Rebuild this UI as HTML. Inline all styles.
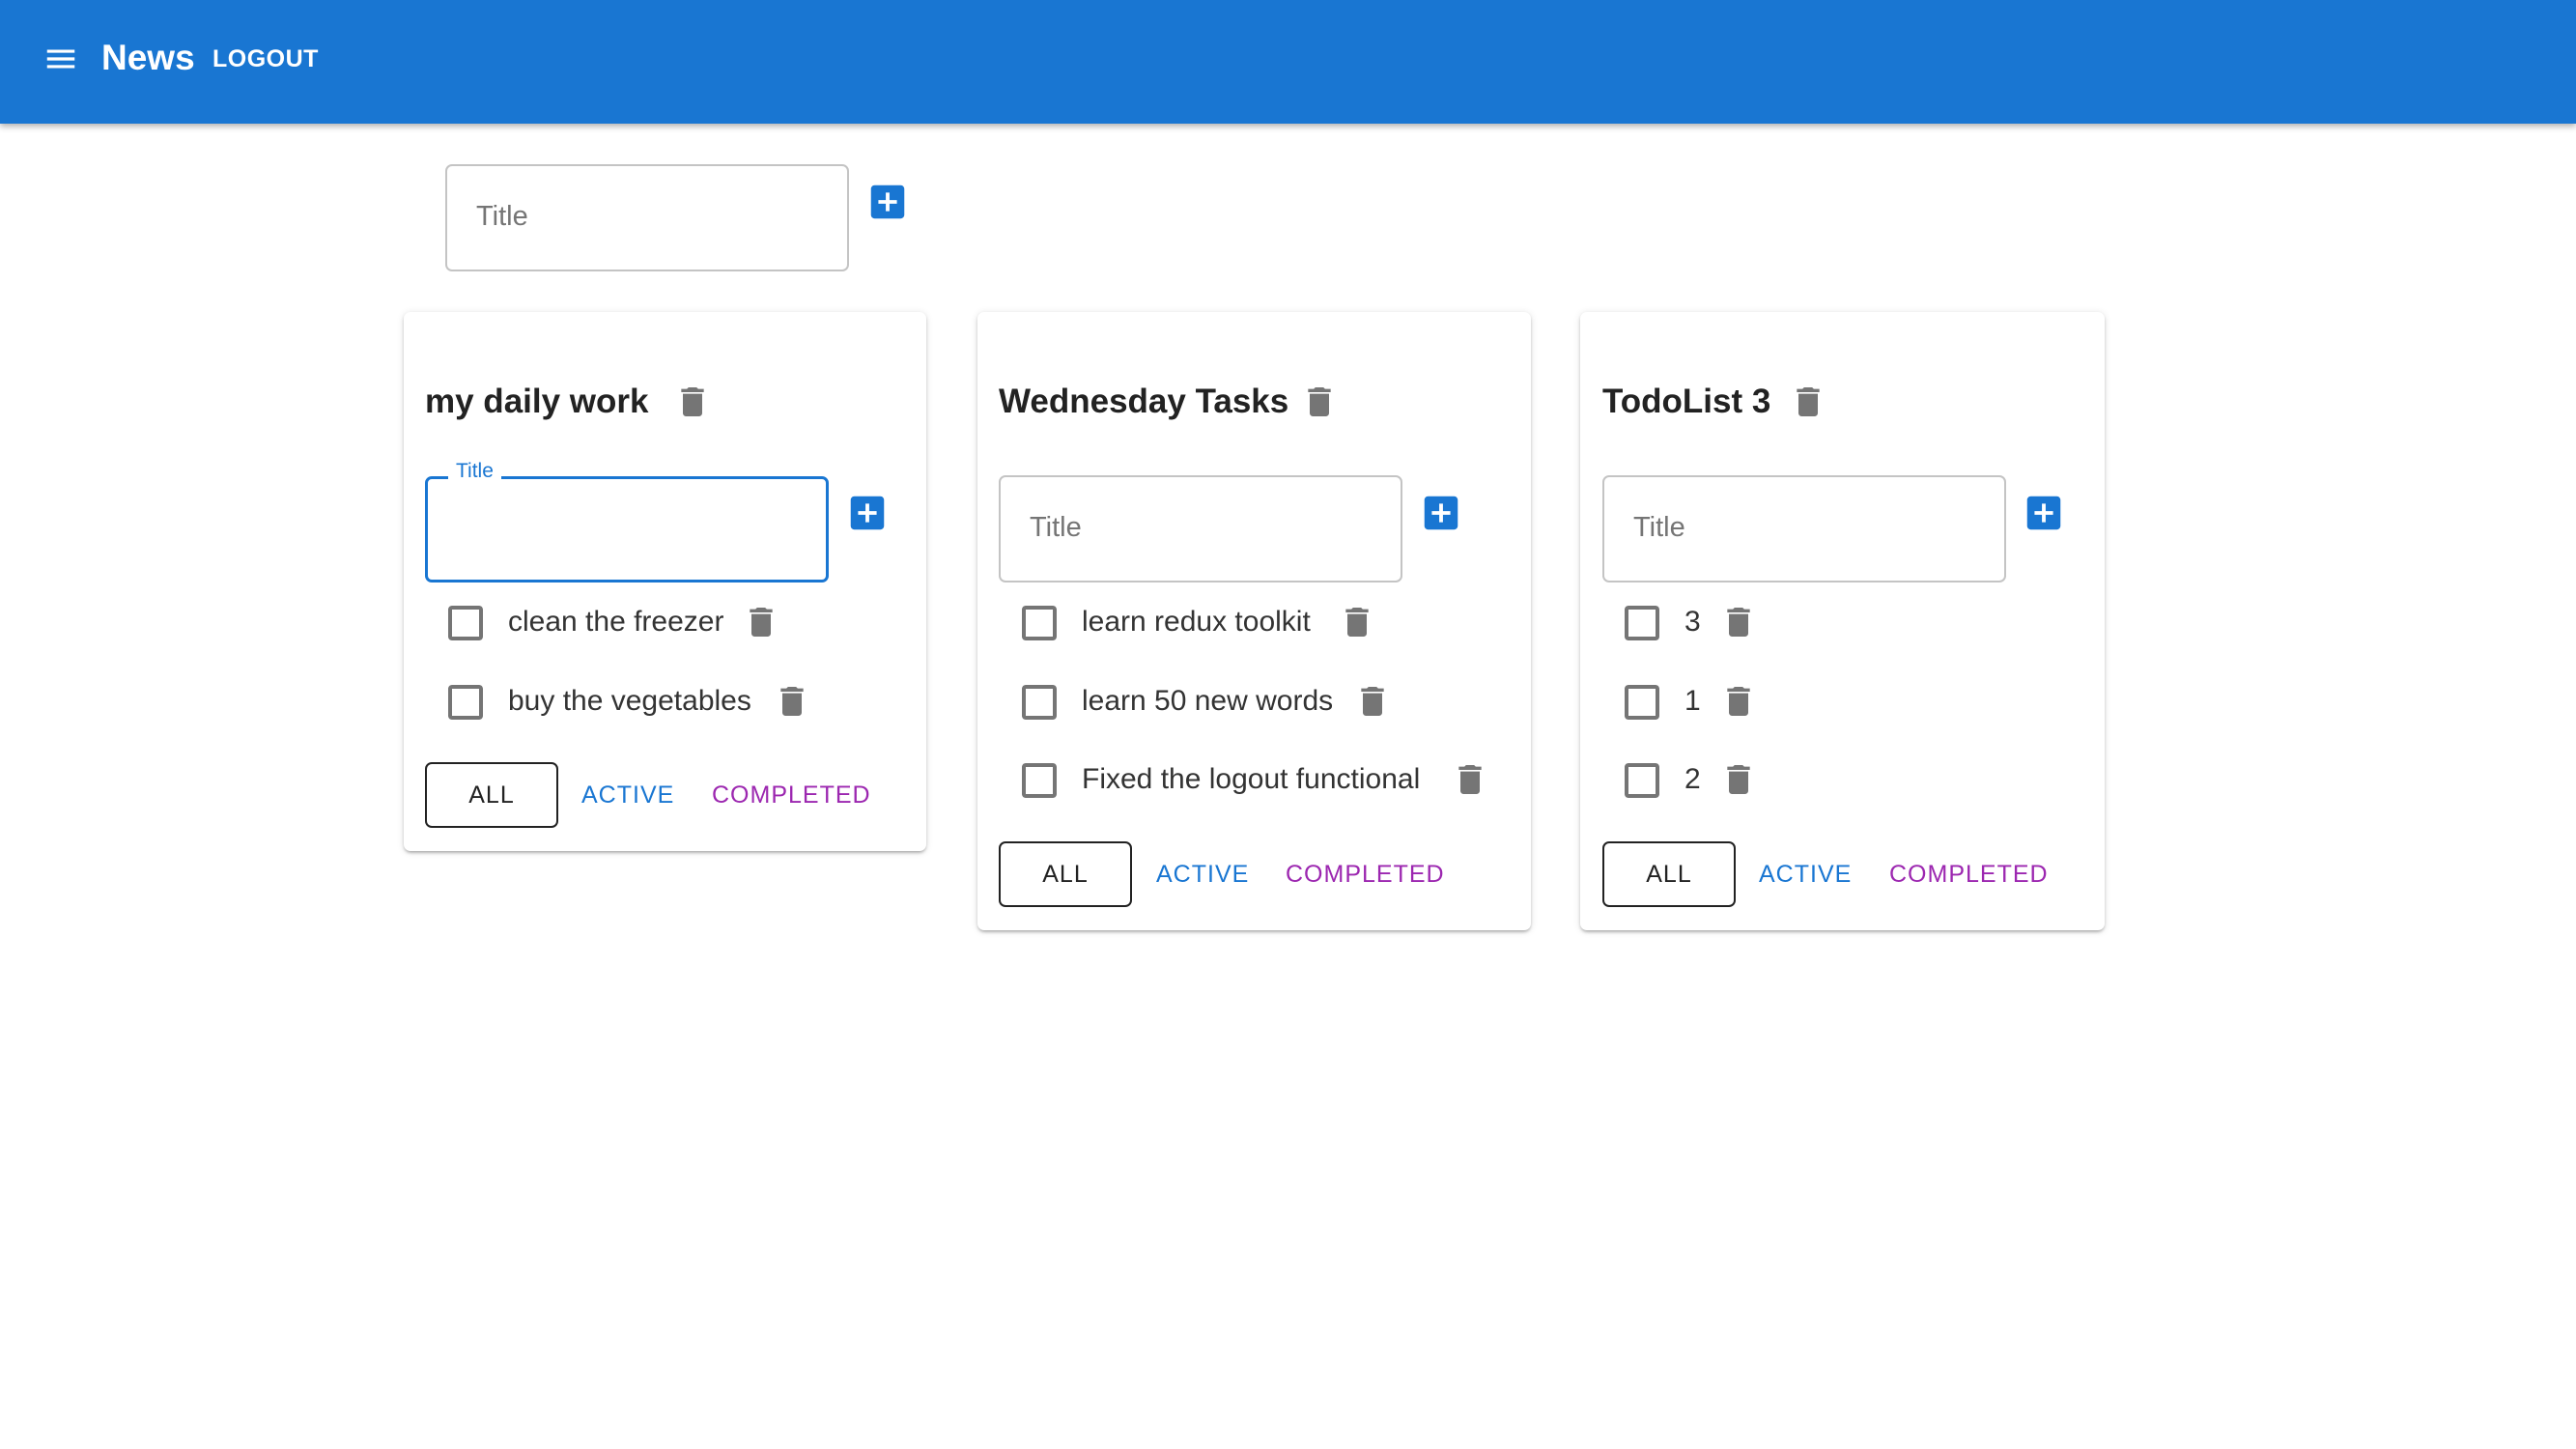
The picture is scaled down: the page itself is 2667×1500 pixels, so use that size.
<!DOCTYPE html>
<html><head><meta charset="utf-8"><style>
*{margin:0;padding:0;box-sizing:border-box}
body{width:2667px;height:1500px;background:#fff;font-family:"Liberation Sans",sans-serif;position:relative;overflow:hidden}
.abs{position:absolute}
.hdr{left:0;top:0;width:2667px;height:128px;background:#1976d2;box-shadow:0 3px 6px rgba(0,0,0,.3)}
.inp{position:absolute;border:2px solid #c4c4c4;border-radius:7px;height:111px;width:418px}
.inp span{position:absolute;left:30px;top:36px;font-size:29px;color:#757575}
.card{position:absolute;background:#fff;border-radius:7px;box-shadow:0 3px 3px -2px rgba(0,0,0,.2),0 2px 3px rgba(0,0,0,.14),0 1px 8px rgba(0,0,0,.12)}
.ttl{position:absolute;font-weight:bold;font-size:35px;color:#222}
.item{position:absolute;font-size:30px;color:#333}
.btn{position:absolute;font-size:25px;letter-spacing:1px}
.all{border:2px solid #222;border-radius:7px;width:138px;height:68px;text-align:center;line-height:64px;color:#222}
svg{position:absolute}
</style></head><body>
<div class="abs hdr">
<svg style="left:44px;top:42px" width="38" height="38" viewBox="0 0 24 24"><path fill="#fff" d="M3 18h18v-2H3v2zm0-5h18v-2H3v2zm0-7v2h18V6H3z"/></svg>
<div class="abs" style="left:105px;top:39px;font-size:37px;color:#fff;font-weight:600">News</div>
<div class="abs" style="left:220px;top:47px;font-size:25px;color:#fff;font-weight:bold;letter-spacing:.5px">LOGOUT</div>
</div>

<div class="inp" style="left:461px;top:170px"><span>Title</span></div>
<svg style="left:896px;top:186px" width="46" height="46" viewBox="0 0 24 24"><path fill="#1976d2" d="M19 3H5c-1.11 0-2 .9-2 2v14c0 1.1.89 2 2 2h14c1.1 0 2-.9 2-2V5c0-1.1-.9-2-2-2zm-2 10h-4v4h-2v-4H7v-2h4V7h2v4h4v2z"/></svg>

<div class="card" style="left:418px;top:323px;width:541px;height:558px"></div>
<div class="ttl" style="left:440px;top:396px">my daily work</div>
<svg style="left:697px;top:396px" width="40" height="40" viewBox="0 0 24 24"><path fill="#757575" d="M6 19c0 1.1.9 2 2 2h8c1.1 0 2-.9 2-2V7H6v12zM19 4h-3.5l-1-1h-5l-1 1H5v2h14V4z"/></svg>
<div class="abs" style="left:440px;top:493px;width:418px;height:110px;border:3px solid #1976d2;border-radius:7px"></div>
<div class="abs" style="left:464px;top:476px;font-size:21px;color:#1976d2;background:#fff;padding:0 8px">Title</div>
<svg style="left:875px;top:508px" width="46" height="46" viewBox="0 0 24 24"><path fill="#1976d2" d="M19 3H5c-1.11 0-2 .9-2 2v14c0 1.1.89 2 2 2h14c1.1 0 2-.9 2-2V5c0-1.1-.9-2-2-2zm-2 10h-4v4h-2v-4H7v-2h4V7h2v4h4v2z"/></svg>

<div class="card" style="left:1012px;top:323px;width:573px;height:640px"></div>
<div class="ttl" style="left:1034px;top:396px">Wednesday Tasks</div>
<svg style="left:1346px;top:396px" width="40" height="40" viewBox="0 0 24 24"><path fill="#757575" d="M6 19c0 1.1.9 2 2 2h8c1.1 0 2-.9 2-2V7H6v12zM19 4h-3.5l-1-1h-5l-1 1H5v2h14V4z"/></svg>
<div class="inp" style="left:1034px;top:492px"><span>Title</span></div>
<svg style="left:1469px;top:508px" width="46" height="46" viewBox="0 0 24 24"><path fill="#1976d2" d="M19 3H5c-1.11 0-2 .9-2 2v14c0 1.1.89 2 2 2h14c1.1 0 2-.9 2-2V5c0-1.1-.9-2-2-2zm-2 10h-4v4h-2v-4H7v-2h4V7h2v4h4v2z"/></svg>

<div class="card" style="left:1636px;top:323px;width:543px;height:640px"></div>
<div class="ttl" style="left:1659px;top:396px">TodoList 3</div>
<svg style="left:1852px;top:396px" width="40" height="40" viewBox="0 0 24 24"><path fill="#757575" d="M6 19c0 1.1.9 2 2 2h8c1.1 0 2-.9 2-2V7H6v12zM19 4h-3.5l-1-1h-5l-1 1H5v2h14V4z"/></svg>
<div class="inp" style="left:1659px;top:492px"><span>Title</span></div>
<svg style="left:2093px;top:508px" width="46" height="46" viewBox="0 0 24 24"><path fill="#1976d2" d="M19 3H5c-1.11 0-2 .9-2 2v14c0 1.1.89 2 2 2h14c1.1 0 2-.9 2-2V5c0-1.1-.9-2-2-2zm-2 10h-4v4h-2v-4H7v-2h4V7h2v4h4v2z"/></svg>

<svg style="left:458px;top:621px" width="48" height="48" viewBox="0 0 24 24"><path fill="#757575" d="M19 5v14H5V5h14m0-2H5c-1.1 0-2 .9-2 2v14c0 1.1.9 2 2 2h14c1.1 0 2-.9 2-2V5c0-1.1-.9-2-2-2z"/></svg>
<div class="item" style="left:526px;top:627px">clean the freezer</div>
<svg style="left:768px;top:624px" width="40" height="40" viewBox="0 0 24 24"><path fill="#757575" d="M6 19c0 1.1.9 2 2 2h8c1.1 0 2-.9 2-2V7H6v12zM19 4h-3.5l-1-1h-5l-1 1H5v2h14V4z"/></svg>
<svg style="left:458px;top:703px" width="48" height="48" viewBox="0 0 24 24"><path fill="#757575" d="M19 5v14H5V5h14m0-2H5c-1.1 0-2 .9-2 2v14c0 1.1.9 2 2 2h14c1.1 0 2-.9 2-2V5c0-1.1-.9-2-2-2z"/></svg>
<div class="item" style="left:526px;top:709px">buy the vegetables</div>
<svg style="left:800px;top:706px" width="40" height="40" viewBox="0 0 24 24"><path fill="#757575" d="M6 19c0 1.1.9 2 2 2h8c1.1 0 2-.9 2-2V7H6v12zM19 4h-3.5l-1-1h-5l-1 1H5v2h14V4z"/></svg>

<svg style="left:1052px;top:621px" width="48" height="48" viewBox="0 0 24 24"><path fill="#757575" d="M19 5v14H5V5h14m0-2H5c-1.1 0-2 .9-2 2v14c0 1.1.9 2 2 2h14c1.1 0 2-.9 2-2V5c0-1.1-.9-2-2-2z"/></svg>
<div class="item" style="left:1120px;top:627px">learn redux toolkit</div>
<svg style="left:1385px;top:624px" width="40" height="40" viewBox="0 0 24 24"><path fill="#757575" d="M6 19c0 1.1.9 2 2 2h8c1.1 0 2-.9 2-2V7H6v12zM19 4h-3.5l-1-1h-5l-1 1H5v2h14V4z"/></svg>
<svg style="left:1052px;top:703px" width="48" height="48" viewBox="0 0 24 24"><path fill="#757575" d="M19 5v14H5V5h14m0-2H5c-1.1 0-2 .9-2 2v14c0 1.1.9 2 2 2h14c1.1 0 2-.9 2-2V5c0-1.1-.9-2-2-2z"/></svg>
<div class="item" style="left:1120px;top:709px">learn 50 new words</div>
<svg style="left:1401px;top:706px" width="40" height="40" viewBox="0 0 24 24"><path fill="#757575" d="M6 19c0 1.1.9 2 2 2h8c1.1 0 2-.9 2-2V7H6v12zM19 4h-3.5l-1-1h-5l-1 1H5v2h14V4z"/></svg>
<svg style="left:1052px;top:784px" width="48" height="48" viewBox="0 0 24 24"><path fill="#757575" d="M19 5v14H5V5h14m0-2H5c-1.1 0-2 .9-2 2v14c0 1.1.9 2 2 2h14c1.1 0 2-.9 2-2V5c0-1.1-.9-2-2-2z"/></svg>
<div class="item" style="left:1120px;top:790px">Fixed the logout functional</div>
<svg style="left:1502px;top:787px" width="40" height="40" viewBox="0 0 24 24"><path fill="#757575" d="M6 19c0 1.1.9 2 2 2h8c1.1 0 2-.9 2-2V7H6v12zM19 4h-3.5l-1-1h-5l-1 1H5v2h14V4z"/></svg>

<svg style="left:1676px;top:621px" width="48" height="48" viewBox="0 0 24 24"><path fill="#757575" d="M19 5v14H5V5h14m0-2H5c-1.1 0-2 .9-2 2v14c0 1.1.9 2 2 2h14c1.1 0 2-.9 2-2V5c0-1.1-.9-2-2-2z"/></svg>
<div class="item" style="left:1744px;top:627px">3</div>
<svg style="left:1780px;top:624px" width="40" height="40" viewBox="0 0 24 24"><path fill="#757575" d="M6 19c0 1.1.9 2 2 2h8c1.1 0 2-.9 2-2V7H6v12zM19 4h-3.5l-1-1h-5l-1 1H5v2h14V4z"/></svg>
<svg style="left:1676px;top:703px" width="48" height="48" viewBox="0 0 24 24"><path fill="#757575" d="M19 5v14H5V5h14m0-2H5c-1.1 0-2 .9-2 2v14c0 1.1.9 2 2 2h14c1.1 0 2-.9 2-2V5c0-1.1-.9-2-2-2z"/></svg>
<div class="item" style="left:1744px;top:709px">1</div>
<svg style="left:1780px;top:706px" width="40" height="40" viewBox="0 0 24 24"><path fill="#757575" d="M6 19c0 1.1.9 2 2 2h8c1.1 0 2-.9 2-2V7H6v12zM19 4h-3.5l-1-1h-5l-1 1H5v2h14V4z"/></svg>
<svg style="left:1676px;top:784px" width="48" height="48" viewBox="0 0 24 24"><path fill="#757575" d="M19 5v14H5V5h14m0-2H5c-1.1 0-2 .9-2 2v14c0 1.1.9 2 2 2h14c1.1 0 2-.9 2-2V5c0-1.1-.9-2-2-2z"/></svg>
<div class="item" style="left:1744px;top:790px">2</div>
<svg style="left:1780px;top:787px" width="40" height="40" viewBox="0 0 24 24"><path fill="#757575" d="M6 19c0 1.1.9 2 2 2h8c1.1 0 2-.9 2-2V7H6v12zM19 4h-3.5l-1-1h-5l-1 1H5v2h14V4z"/></svg>

<div class="btn all" style="left:440px;top:789px">ALL</div>
<div class="btn" style="left:602px;top:809px;color:#1976d2">ACTIVE</div>
<div class="btn" style="left:737px;top:809px;color:#9c27b0">COMPLETED</div>

<div class="btn all" style="left:1034px;top:871px">ALL</div>
<div class="btn" style="left:1197px;top:891px;color:#1976d2">ACTIVE</div>
<div class="btn" style="left:1331px;top:891px;color:#9c27b0">COMPLETED</div>

<div class="btn all" style="left:1659px;top:871px">ALL</div>
<div class="btn" style="left:1821px;top:891px;color:#1976d2">ACTIVE</div>
<div class="btn" style="left:1956px;top:891px;color:#9c27b0">COMPLETED</div>
</body></html>
